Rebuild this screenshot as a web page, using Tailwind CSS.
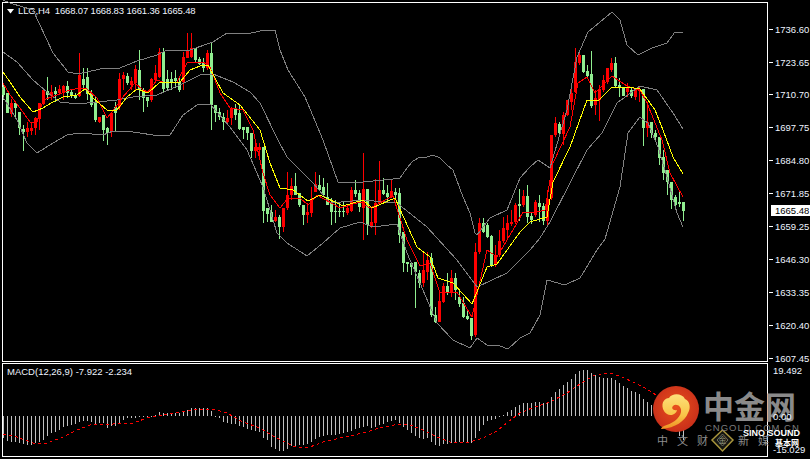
<!DOCTYPE html>
<html>
<head>
<meta charset="utf-8">
<script src="https://cdn.jsdelivr.net/npm/@tailwindcss/browser@4"></script>
</head>
<body class="bg-black">
<div class="relative w-[810px] h-[459px] overflow-hidden bg-black font-['Liberation_Sans','Noto_Sans_CJK_SC',sans-serif] text-[9.5px] text-[#eef4ff]">
  <div class="flex flex-col w-[768px] pl-[2px] pt-[2px] gap-px">
    <div class="h-[360px] border border-white flex items-start gap-[4px] pl-[4px] pt-[2px] leading-[11px]">
      <svg class="w-[7px] h-[5px] mt-[4px]" viewBox="0 0 7 5"><path d="M0 0H7L3.5 4.5Z" fill="#fff"/></svg>
      <span class="whitespace-pre tracking-[-0.15px]">LLG,H4  1668.07 1668.83 1661.36 1665.48</span>
    </div>
    <div class="h-[94px] border border-white pl-[4px] pt-[2px] leading-[11px]">MACD(12,26,9) -7.922 -2.234</div>
  </div>

  <svg class="absolute left-0 top-0 w-[810px] h-[459px]" viewBox="0 0 810 459" fill="none">
    <g shape-rendering="crispEdges">
      <!-- green wicks -->
      <path stroke="#90ee90" stroke-width="1" d="M3.5 85V100M7.5 93V113M15.5 102V117M19.5 112V135M23.5 125V151M47.5 77V100M55.5 87V102M67.5 81V98M71.5 90V98M75.5 93V99M83.5 68V90M87.5 68V100M91.5 90V107M95.5 97V122M103.5 115V141M107.5 127V145M115.5 102V132M127.5 73V85M139.5 50V100M143.5 88V112M147.5 97V107M163.5 48V93M167.5 70V90M171.5 72V90M175.5 70V88M179.5 78V92M195.5 48V62M199.5 57V65M203.5 58V72M211.5 42V130M215.5 105V122M219.5 108V120M223.5 113V130M235.5 104V120M239.5 105V130M243.5 127V139M247.5 127V140M251.5 133V158M263.5 147V223M267.5 208V222M271.5 205V222M279.5 215V239M295.5 173V195M299.5 193V207M303.5 205V225M319.5 175V190M323.5 178V195M327.5 183V205M331.5 198V225M335.5 200V223M339.5 203V217M343.5 202V217M355.5 180V197M359.5 190V212M367.5 189V235M383.5 178V195M387.5 185V202M395.5 188V200M399.5 188V243M403.5 232V272M407.5 262V272M411.5 263V275M415.5 262V308M419.5 270V288M431.5 253V317M435.5 307V323M447.5 273V295M455.5 273V300M459.5 290V307M463.5 297V318M467.5 310V320M471.5 318V340M483.5 218V233M487.5 223V238M491.5 235V267M519.5 189V221M527.5 185V223M531.5 212V224M539.5 195V222M543.5 203V225M559.5 122V134M583.5 55V73M587.5 65V78M591.5 51V108M615.5 57V87M619.5 78V97M623.5 87V96M631.5 88V98M643.5 89V146M651.5 122V138M655.5 130V140M659.5 137V165M663.5 150V180M667.5 170V195M671.5 182V209M675.5 195V207M679.5 190V207M683.5 202V221"/>
      <!-- green bodies -->
      <path stroke="#90ee90" stroke-width="3" d="M3.5 87V95M7.5 93V113M15.5 103V108M19.5 112V128M23.5 129V132M47.5 91V95M55.5 91V94M67.5 86V93M71.5 92V96M75.5 95V98M83.5 79V85M87.5 77V94M91.5 93V105M95.5 103V120M103.5 115V130M107.5 128V133M115.5 107V113M127.5 76V83M139.5 70V90M143.5 91V98M147.5 97V101M163.5 52V89M167.5 79V88M171.5 79V83M175.5 78V81M179.5 82V90M195.5 48V60M199.5 59V64M203.5 62V68M211.5 53V105M215.5 105V113M219.5 112V117M223.5 117V122M235.5 109V115M239.5 113V129M243.5 127V130M247.5 127V133M251.5 133V151M263.5 147V211M267.5 208V214M271.5 212V222M279.5 217V227M295.5 186V195M299.5 193V205M303.5 205V215M319.5 185V190M323.5 187V195M327.5 197V205M331.5 203V212M335.5 211V212M339.5 211V212M343.5 211V212M355.5 190V194M359.5 193V207M367.5 189V225M383.5 190V194M387.5 193V197M395.5 192V195M399.5 193V235M403.5 232V263M407.5 262V264M411.5 263V267M415.5 262V272M419.5 273V283M431.5 258V315M435.5 315V322M447.5 286V293M455.5 278V290M459.5 297V304M463.5 303V317M467.5 316V319M471.5 318V336M483.5 223V232M487.5 225V237M491.5 236V265M519.5 204V206M527.5 196V217M531.5 216V220M539.5 203V207M543.5 206V221M559.5 124V133M583.5 55V72M587.5 71V76M591.5 74V106M615.5 63V86M619.5 85V87M623.5 87V96M631.5 90V96M643.5 89V128M651.5 122V133M655.5 133V137M659.5 137V158M663.5 157V173M667.5 170V182M671.5 182V200M675.5 197V205M679.5 202V204M683.5 202V211"/>
      <!-- red wicks -->
      <path stroke="#ff0000" stroke-width="1" d="M11.5 99V117M27.5 122V137M31.5 122V135M35.5 117V135M39.5 103V130M43.5 88V105M51.5 85V100M59.5 85V95M63.5 85V100M79.5 53V97M99.5 117V123M111.5 113V137M119.5 73V110M123.5 72V90M131.5 77V90M135.5 65V90M151.5 78V102M155.5 65V81M159.5 48V78M183.5 52V90M187.5 33V58M191.5 33V58M207.5 50V70M227.5 110V125M231.5 107V125M255.5 143V158M259.5 143V160M275.5 210V222M283.5 208V232M287.5 172V210M291.5 178V200M307.5 203V223M311.5 187V217M315.5 172V192M347.5 205V215M351.5 187V212M363.5 153V240M371.5 207V228M375.5 179V235M379.5 161V205M391.5 180V198M423.5 252V287M427.5 252V280M439.5 293V322M443.5 283V303M451.5 270V297M475.5 243V337M479.5 218V254M495.5 245V267M499.5 230V257M503.5 217V243M507.5 215V240M511.5 210V226M515.5 203V224M523.5 190V207M535.5 200V217M547.5 190V225M551.5 135V200M555.5 117V137M563.5 112V145M567.5 100V116M571.5 85V110M575.5 48V93M579.5 52V65M595.5 90V115M599.5 85V121M603.5 75V92M607.5 68V84M611.5 58V72M627.5 83V97M635.5 88V100M639.5 86V102M647.5 102V137"/>
      <!-- red bodies -->
      <path stroke="#ff0000" stroke-width="3" d="M11.5 103V114M27.5 128V132M31.5 128V131M35.5 118V128M39.5 103V119M43.5 90V104M51.5 92V96M59.5 89V93M63.5 86V92M79.5 75V96M99.5 117V122M111.5 113V132M119.5 79V107M123.5 75V79M131.5 81V85M135.5 69V83M151.5 79V100M155.5 73V80M159.5 52V77M183.5 57V82M187.5 50V58M191.5 48V57M207.5 53V68M227.5 118V122M231.5 108V118M255.5 147V151M259.5 147V150M275.5 217V221M283.5 208V227M287.5 195V208M291.5 186V195M307.5 212V215M311.5 200V213M315.5 184V192M347.5 208V213M351.5 190V211M363.5 189V208M371.5 222V226M375.5 203V223M379.5 190V203M391.5 191V197M423.5 270V283M427.5 260V272M439.5 301V322M443.5 286V302M451.5 278V293M475.5 252V335M479.5 223V252M495.5 255V265M499.5 241V255M503.5 228V241M507.5 223V230M511.5 222V224M515.5 205V222M523.5 196V205M535.5 202V215M547.5 199V221M551.5 135V198M555.5 123V135M563.5 115V134M567.5 100V115M571.5 93V102M575.5 62V92M579.5 55V63M595.5 98V105M599.5 89V100M603.5 80V90M607.5 68V82M611.5 63V70M627.5 88V92M635.5 89V97M639.5 89V91M647.5 122V128"/>
      <!-- bollinger bands -->
      <g stroke="#808080" stroke-width="1">
        <polyline points="3,0 10,3 33,10 53,53 68,72 78,74 100,69 120,68 137,61 157,55 165,51 190,50 213,42 227,33 247,34 260,31 270,30 275,30 280,50 288,70 305,97 323,140 338,182 363,182 393,179 400,178 407,168 413,161 420,157 427,157 433,155 440,158 447,165 453,170 463,197 470,213 475,233 477,235 490,218 507,210 520,178 530,167 538,160 550,168 567,110 577,57 588,32 600,22 612,12 620,20 627,45 638,55 652,48 667,43 675,32 683,33"/>
        <polyline points="3,52 17,62 33,80 47,92 60,102 77,104 97,102 117,100 133,97 157,95 180,85 200,75 213,74 233,82 250,92 260,103 278,140 287,157 313,183 330,203 363,200 397,203 427,227 457,260 477,287 507,273 530,250 540,238 550,222 570,183 587,150 602,133 617,103 640,86 657,90 673,113 683,129"/>
        <polyline points="3,97 17,120 27,143 37,153 53,143 67,135 80,133 103,135 113,131 133,132 160,136 170,135 183,115 197,105 210,104 230,127 247,150 263,187 277,233 287,243 307,256 323,243 340,228 360,222 373,227 397,224 407,253 420,283 437,323 453,340 470,348 477,338 487,345 500,346 508,349 520,338 530,333 540,315 547,280 565,285 580,278 597,250 605,239 620,187 628,133 640,117 648,123 658,147 667,177 677,213 683,227"/>
      </g>
      <polyline stroke="#ff0000" stroke-width="1" points="3,83 10,95 20,108 30,122 37,122 43,100 57,95 70,90 80,88 87,89 97,98 107,118 115,108 122,98 135,83 143,90 148,92 157,80 163,82 177,82 187,63 203,62 210,67 220,93 230,108 243,110 253,130 263,173 270,195 280,208 288,198 300,198 308,205 317,195 340,208 360,202 370,208 393,196 407,240 420,266 430,263 440,293 457,292 472,317 487,250 497,257 517,223 523,212 533,213 545,210 553,163 570,127 578,83 587,77 595,93 612,76 627,86 640,90 647,103 662,140 670,173 683,197"/>
      <polyline stroke="#ffff00" stroke-width="1" points="3,72 10,82 20,97 33,112 43,108 53,102 63,97 77,95 85,89 93,98 107,110 117,110 127,97 137,89 148,93 160,82 180,82 190,70 200,66 208,65 223,93 240,105 260,130 270,163 280,188 293,190 308,201 320,195 343,206 363,200 372,208 395,198 417,247 430,257 438,278 453,283 472,304 487,267 497,264 520,232 530,222 547,217 553,182 570,147 587,100 598,101 612,87 627,87 640,89 655,110 663,130 673,157 683,174"/>
      <!-- MACD histogram -->
      <path stroke="#c0c0c0" stroke-width="1" d="M3.5 416V438M7.5 416V441M11.5 416V442M15.5 416V442M19.5 416V443M23.5 416V444M27.5 416V445M31.5 416V445M35.5 416V443M39.5 416V442M43.5 416V440M47.5 416V436M51.5 416V433M55.5 416V432M59.5 416V430M63.5 416V427M67.5 416V426M71.5 416V425M75.5 416V424M79.5 416V422M83.5 416V421M87.5 416V421M91.5 416V422M95.5 416V424M99.5 416V423M103.5 416V423M107.5 416V428M111.5 416V426M115.5 416V426M119.5 416V424M123.5 416V420M127.5 416V418M131.5 416V418M135.5 416V418M139.5 416V417M143.5 416V417M147.5 416V417M151.5 416V417M155.5 416V415M159.5 416V412M163.5 416V413M167.5 416V413M171.5 416V413M175.5 416V413M179.5 416V413M183.5 416V411M187.5 416V410M191.5 416V408M195.5 416V408M199.5 416V408M203.5 416V408M207.5 416V408M211.5 416V411M215.5 416V417M219.5 416V418M223.5 416V422M227.5 416V423M231.5 416V424M235.5 416V424M239.5 416V426M243.5 416V427M247.5 416V429M251.5 416V430M255.5 416V431M259.5 416V432M263.5 416V438M267.5 416V440M271.5 416V447M275.5 416V449M279.5 416V451M283.5 416V451M287.5 416V449M291.5 416V446M295.5 416V446M299.5 416V445M303.5 416V445M307.5 416V444M311.5 416V442M315.5 416V439M319.5 416V437M323.5 416V436M327.5 416V435M331.5 416V435M335.5 416V435M339.5 416V434M343.5 416V433M347.5 416V432M351.5 416V431M355.5 416V429M359.5 416V428M363.5 416V427M367.5 416V426M371.5 416V428M375.5 416V427M379.5 416V425M383.5 416V424M387.5 416V422M391.5 416V421M395.5 416V420M399.5 416V423M403.5 416V427M407.5 416V430M411.5 416V433M415.5 416V436M419.5 416V438M423.5 416V439M427.5 416V438M431.5 416V442M435.5 416V445M439.5 416V446M443.5 416V444M447.5 416V444M451.5 416V443M455.5 416V442M459.5 416V442M463.5 416V442M467.5 416V443M471.5 416V443M475.5 416V438M479.5 416V431M483.5 416V425M487.5 416V421M491.5 416V420M495.5 416V419M499.5 416V417M503.5 416V415M507.5 416V412M511.5 416V410M515.5 416V407M519.5 416V405M523.5 416V403M527.5 416V403M531.5 416V403M535.5 416V402M539.5 416V402M543.5 416V403M547.5 416V403M551.5 416V397M555.5 416V392M559.5 416V389M563.5 416V385M567.5 416V382M571.5 416V379M575.5 416V374M579.5 416V371M583.5 416V370M587.5 416V370M591.5 416V373M595.5 416V375M599.5 416V377M603.5 416V378M607.5 416V378M611.5 416V378M615.5 416V380M619.5 416V383M623.5 416V386M627.5 416V388M631.5 416V391M635.5 416V392M639.5 416V394M643.5 416V399M647.5 416V402M651.5 416V405M655.5 416V407M659.5 416V410M663.5 416V413M671.5 416V422M675.5 416V428M679.5 416V436M683.5 416V440"/>
      <!-- MACD signal -->
      <polyline stroke="#ff0000" stroke-width="1" stroke-dasharray="3 3" points="3,434 17,437 33,443 47,443 63,437 77,430 93,424 113,424 133,423 150,417 173,413 193,410 213,409 227,413 243,422 260,428 273,436 287,443 298,448 310,447 323,442 340,438 363,433 383,427 400,424 410,425 423,430 437,437 450,442 467,443 483,438 497,431 508,422 520,413 532,408 550,402 567,393 580,384 593,376 610,373 622,377 633,382 647,389 653,393 670,405"/>
      <!-- axis ticks -->
      <path stroke="#fff" stroke-width="1" d="M769 29.5H773M769 62.5H773M769 94.5H773M769 127.5H773M769 160.5H773M769 193.5H773M769 226.5H773M769 259.5H773M769 292.5H773M769 325.5H773M769 358.5H773"/>
      <rect x="771" y="205" width="39" height="11" fill="#fff"/>
    </g>

    <!-- watermark logo -->
    <defs>
      <radialGradient id="disc" cx="50%" cy="45%" r="55%">
        <stop offset="0" stop-color="#e8501c"/>
        <stop offset="1" stop-color="#c92f1a"/>
      </radialGradient>
      <linearGradient id="swirl" x1="0" y1="0" x2="0" y2="1">
        <stop offset="0" stop-color="#fde07a"/>
        <stop offset="0.6" stop-color="#f9c548"/>
        <stop offset="1" stop-color="#ee8f22"/>
      </linearGradient>
    </defs>
    <circle cx="676" cy="409" r="23" fill="url(#disc)"/>
    <path fill="url(#swirl)" d="M663 409C661 402 665 398 669 398C672 393 682 393 685 399C690 401 691 408 688 413C685 421 675 428 662 429C660 429 662 427 664 426C671 424 680 419 681 412C682 406 676 403 673 406C671 408 673 411 677 410C676 415 670 416 667 414C665 413 664 411 663 409Z"/>
    <polygon points="722.5,430 733,440 722.5,451 712,440" fill="#141410" stroke="#a8953c" stroke-width="1.5"/>
    <polygon points="722.5,434 728,440 722.5,446 717,440" fill="none" stroke="#6d6d5c" stroke-width="1"/>

    <g class="font-['Liberation_Sans','Noto_Sans_CJK_SC',sans-serif]">
      <text x="703" y="418" class="text-[31px] font-bold fill-[#8a8a8a]">中金网</text>
      <text x="705" y="431" class="text-[9.5px] fill-[#7c7c7c] tracking-[1px]">CNGOLD.COM.CN</text>
      <text x="657" y="445" class="text-[11px] fill-[#8e8e8e] tracking-[9px]">中文财</text>
      <text x="718.5" y="443" class="text-[8px] fill-[#9a9a80]">金</text>
      <text x="738" y="445" class="text-[11px] fill-[#8e8e8e] tracking-[9px]">新媒</text>
      <text x="743" y="436" class="text-[9px] font-bold fill-white">SINO SOUND</text>
      <text x="775" y="446" class="text-[8px] font-bold fill-white">基本网</text>
    </g>

    <!-- axis labels -->
    <g class="font-['Liberation_Sans',sans-serif] text-[9.5px] fill-[#eef4ff]">
      <text x="775" y="33">1736.60</text>
      <text x="775" y="66">1723.65</text>
      <text x="775" y="98">1710.70</text>
      <text x="775" y="131">1697.75</text>
      <text x="775" y="164">1684.80</text>
      <text x="775" y="197">1671.85</text>
      <text x="775" y="214" class="fill-black">1665.48</text>
      <text x="775" y="230">1659.25</text>
      <text x="775" y="263">1646.30</text>
      <text x="775" y="296">1633.35</text>
      <text x="775" y="329">1620.40</text>
      <text x="775" y="362">1607.45</text>
      <text x="773" y="374">19.492</text>
      <text x="773" y="420">0.00</text>
      <text x="773" y="453">-15.029</text>
    </g>
  </svg>
</div>
</body>
</html>
